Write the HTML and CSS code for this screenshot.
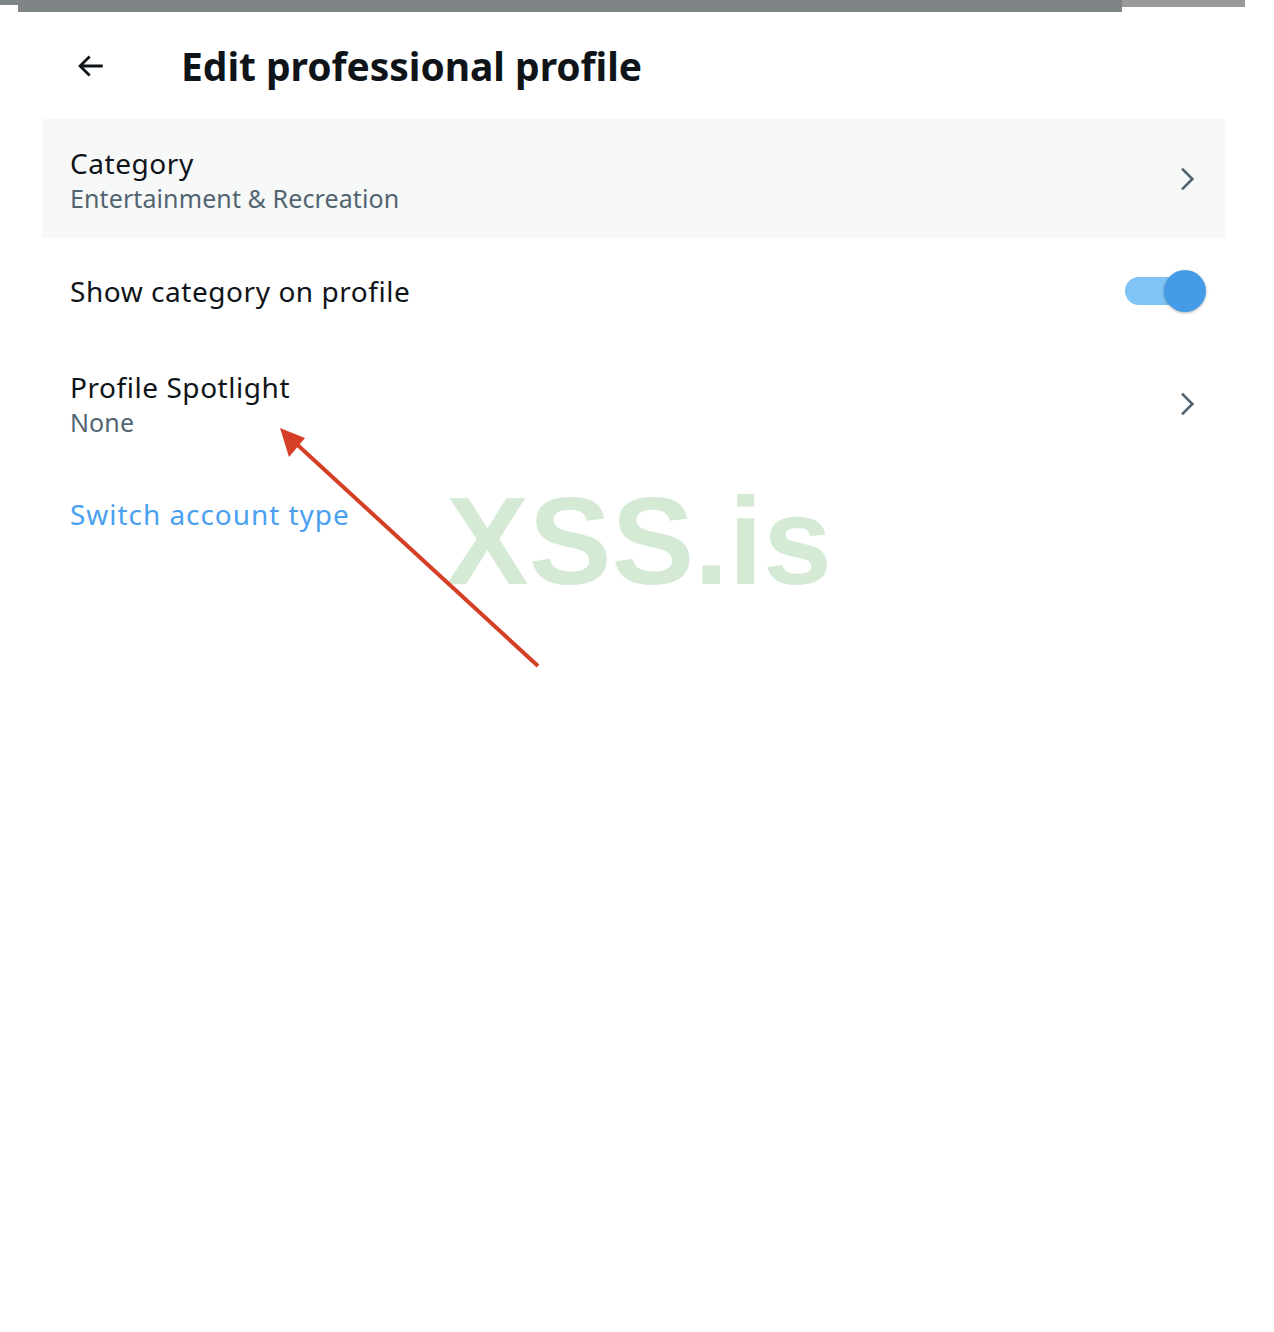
FILE: index.html
```html
<!DOCTYPE html>
<html lang="en">
<head>
    <meta charset="UTF-8">
    <meta name="viewport" content="width=device-width, initial-scale=1.0">
    <title>Edit professional profile</title>
    <link rel="stylesheet" href="styles.css">
</head>
<body>
    <div class="topbar">
        <div class="bar-left"></div>
        <div class="bar-mid"></div>
        <div class="bar-right"></div>
    </div>

    <div class="sheet">
        <div class="header">
            <button class="back" aria-label="Back">
                <svg viewBox="0 0 24 24" width="34" height="34"><path d="M7.414 13l5.043 5.04-1.414 1.42L3.586 12l7.457-7.46 1.414 1.42L7.414 11H21v2H7.414z" fill="#0f1419"/></svg>
            </button>
            <h1>Edit professional profile</h1>
        </div>

        <div class="row active">
            <div class="text">
                <div class="label">Category</div>
                <div class="sub">Entertainment &amp; Recreation</div>
            </div>
            <svg class="chev" viewBox="0 0 24 24" width="32" height="32"><path d="M14.586 12L7.543 4.96l1.414-1.42L17.414 12l-8.457 8.46-1.414-1.42L14.586 12z" fill="#536471"/></svg>
        </div>

        <div class="row toggle-row">
            <div class="label">Show category on profile</div>
            <div class="switch">
                <div class="track"></div>
                <div class="knob"></div>
            </div>
        </div>

        <div class="row spot">
            <div class="text">
                <div class="label">Profile Spotlight</div>
                <div class="sub">None</div>
            </div>
            <svg class="chev" viewBox="0 0 24 24" width="32" height="32"><path d="M14.586 12L7.543 4.96l1.414-1.42L17.414 12l-8.457 8.46-1.414-1.42L14.586 12z" fill="#536471"/></svg>
        </div>

        <a class="switch-link" href="#">Switch account type</a>
    </div>

    <!-- overlays from the screenshot -->
    <div class="watermark">XSS.is</div>
    <svg class="pointer" width="300" height="260" viewBox="0 0 300 260">
        <line x1="278" y1="246" x2="30" y2="18" stroke="#d53f26" stroke-width="4"/>
        <polygon points="20,8 45,18 29,37" fill="#d53f26"/>
    </svg>
</body>
</html>
```

FILE: styles.css
```css
body {
    margin: 0;
    background: #ffffff;
    font-family: "Noto Sans", Arial, sans-serif;
    color: #0f1419;
    position: relative;
    min-height: 1332px;
}

.topbar {
    display: flex;
    align-items: flex-start;
}
.bar-left {
    width: 18px;
    height: 5px;
    background: #7f8487;
}
.bar-mid {
    width: 1104px;
    height: 12px;
    background: #7f8487;
}
.bar-right {
    width: 123px;
    height: 7px;
    background: #9a9a9a;
}

.sheet {
    margin-left: 42px;
    width: 1183px;
    border-radius: 30px 30px 0 0;
    background: #ffffff;
    padding-bottom: 40px;
}

.header {
    display: flex;
    align-items: center;
    height: 107px;
}
.back {
    background: none;
    border: none;
    padding: 0;
    margin-left: 31px;
    width: 34px;
    height: 34px;
    display: flex;
}
.header h1 {
    margin: 0 0 0 74px;
    font-size: 39px;
    font-weight: 700;
    letter-spacing: -0.05px;
}

.row {
    display: flex;
    align-items: center;
    justify-content: space-between;
    padding: 0 22px 0 28px;
}
.row.active {
    background: #f7f9f9;
    height: 116px;
    padding-top: 3px;
}
.row.active .chev {
    margin-top: -3px;
}
.toggle-row {
    height: 106px;
    padding-right: 26px;
}
.spot {
    height: 120px;
}
.label {
    font-size: 28px;
    line-height: 36px;
    letter-spacing: 0.55px;
}
.sub {
    font-size: 25px;
    line-height: 35px;
    letter-spacing: 0.1px;
    color: #536471;
}

.switch {
    position: relative;
    width: 82px;
    height: 42px;
    margin-right: -8px;
}
.track {
    position: absolute;
    left: 0;
    top: 7px;
    width: 64px;
    height: 28px;
    border-radius: 14px;
    background: #80c4f5;
}
.knob {
    position: absolute;
    left: 39px;
    top: 0;
    width: 42px;
    height: 42px;
    border-radius: 50%;
    background: #469be8;
    box-shadow: 0 1px 3px rgba(0,0,0,0.3);
}

.switch-link {
    display: inline-block;
    margin: 31px 0 0 28px;
    font-size: 28px;
    letter-spacing: 0.95px;
    color: #4a9ff0;
    text-decoration: none;
}

.watermark {
    position: absolute;
    left: 446px;
    top: 470px;
    font-family: "Liberation Sans", Arial, sans-serif;
    font-weight: 700;
    font-size: 124px;
    color: #d4ead5;
    pointer-events: none;
}
.pointer {
    position: absolute;
    left: 260px;
    top: 420px;
}
```
